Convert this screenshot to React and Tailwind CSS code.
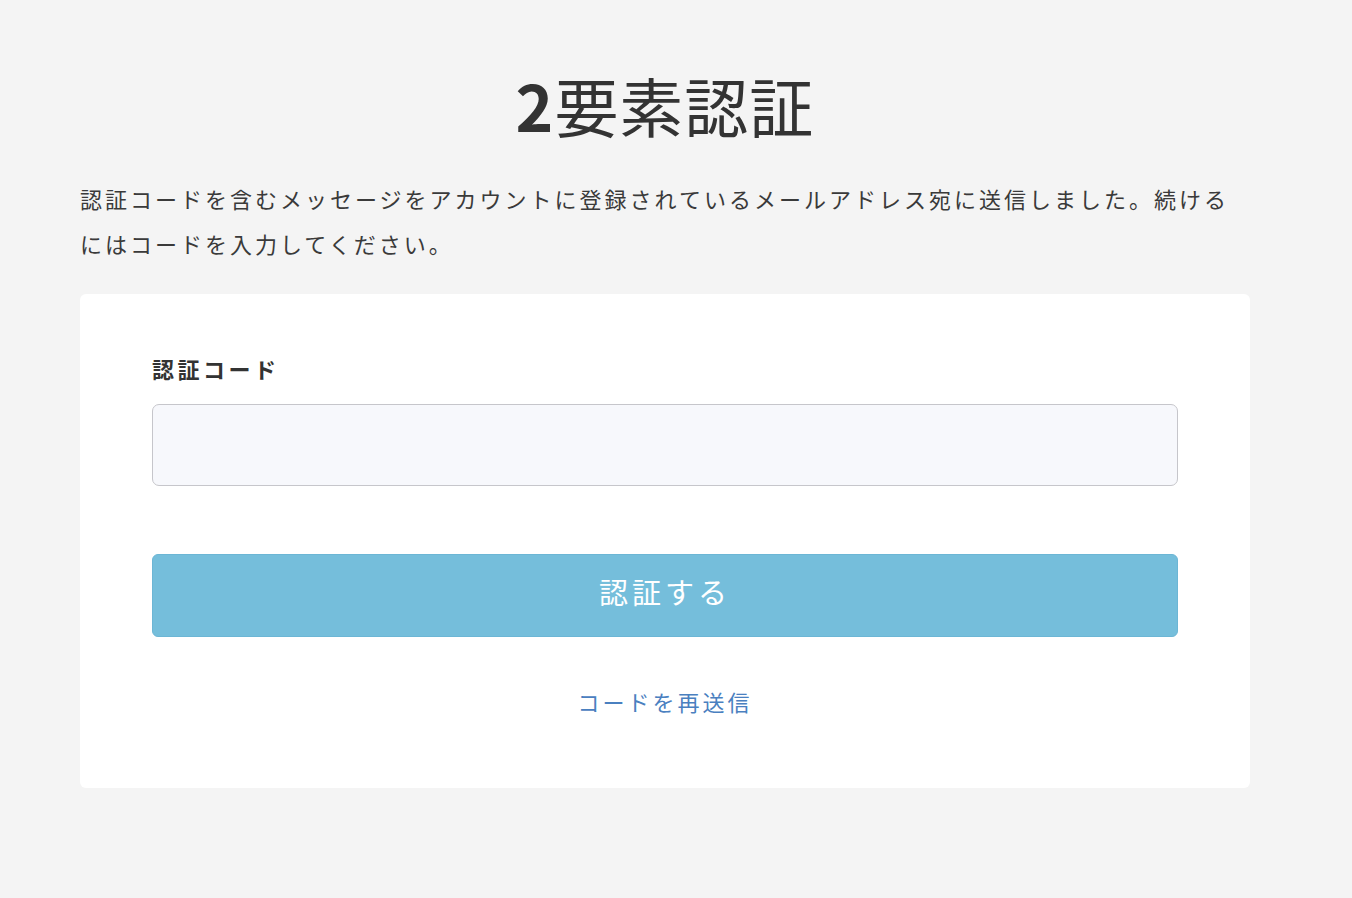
export default function App() {
  return (
    <div
      className="min-h-[898px] bg-[#f4f4f4] text-[#333333]"
      style={{ fontFamily: '"Noto Sans CJK JP", "Noto Sans", sans-serif' }}
    >
      <div className="mx-[80px] w-[1170px] pt-[64px]">
        {/* Title */}
        <h1 className="text-center text-[64px] leading-[80px] font-normal tracking-[1px]">
          <span className="font-bold">2</span>要素認証
        </h1>

        {/* Description */}
        <p className="mt-[32px] text-[22px] leading-[45px] tracking-[3px] text-[#3a3a3a]">
          認証コードを含むメッセージをアカウントに登録されているメールアドレス宛に送信しました。続けるにはコードを入力してください。
        </p>

        {/* Card */}
        <div className="mt-[28px] rounded-[6px] bg-white px-[72px] pt-[50px] pb-[67px]">
          <label className="block text-[22px] leading-[48px] font-bold tracking-[3.5px] text-[#333333]">
            認証コード
          </label>
          <input
            type="text"
            className="mt-[12px] block h-[82px] w-full rounded-[7px] border-[1.5px] border-[#c6c6cb] bg-[#f7f8fc] px-4 text-[22px] outline-none"
          />
          <button
            type="button"
            className="mt-[68px] block h-[83px] w-full rounded-[6px] border border-[#6cb6d5] bg-[#75bedb] pb-[7px] text-[29px] tracking-[4px] text-white"
          >
            認証する
          </button>
          <div className="mt-[44px] text-center">
            <a href="#" className="text-[22px] leading-[40px] tracking-[3px] text-[#4a80c0]">
              コードを再送信
            </a>
          </div>
        </div>
      </div>
    </div>
  );
}
